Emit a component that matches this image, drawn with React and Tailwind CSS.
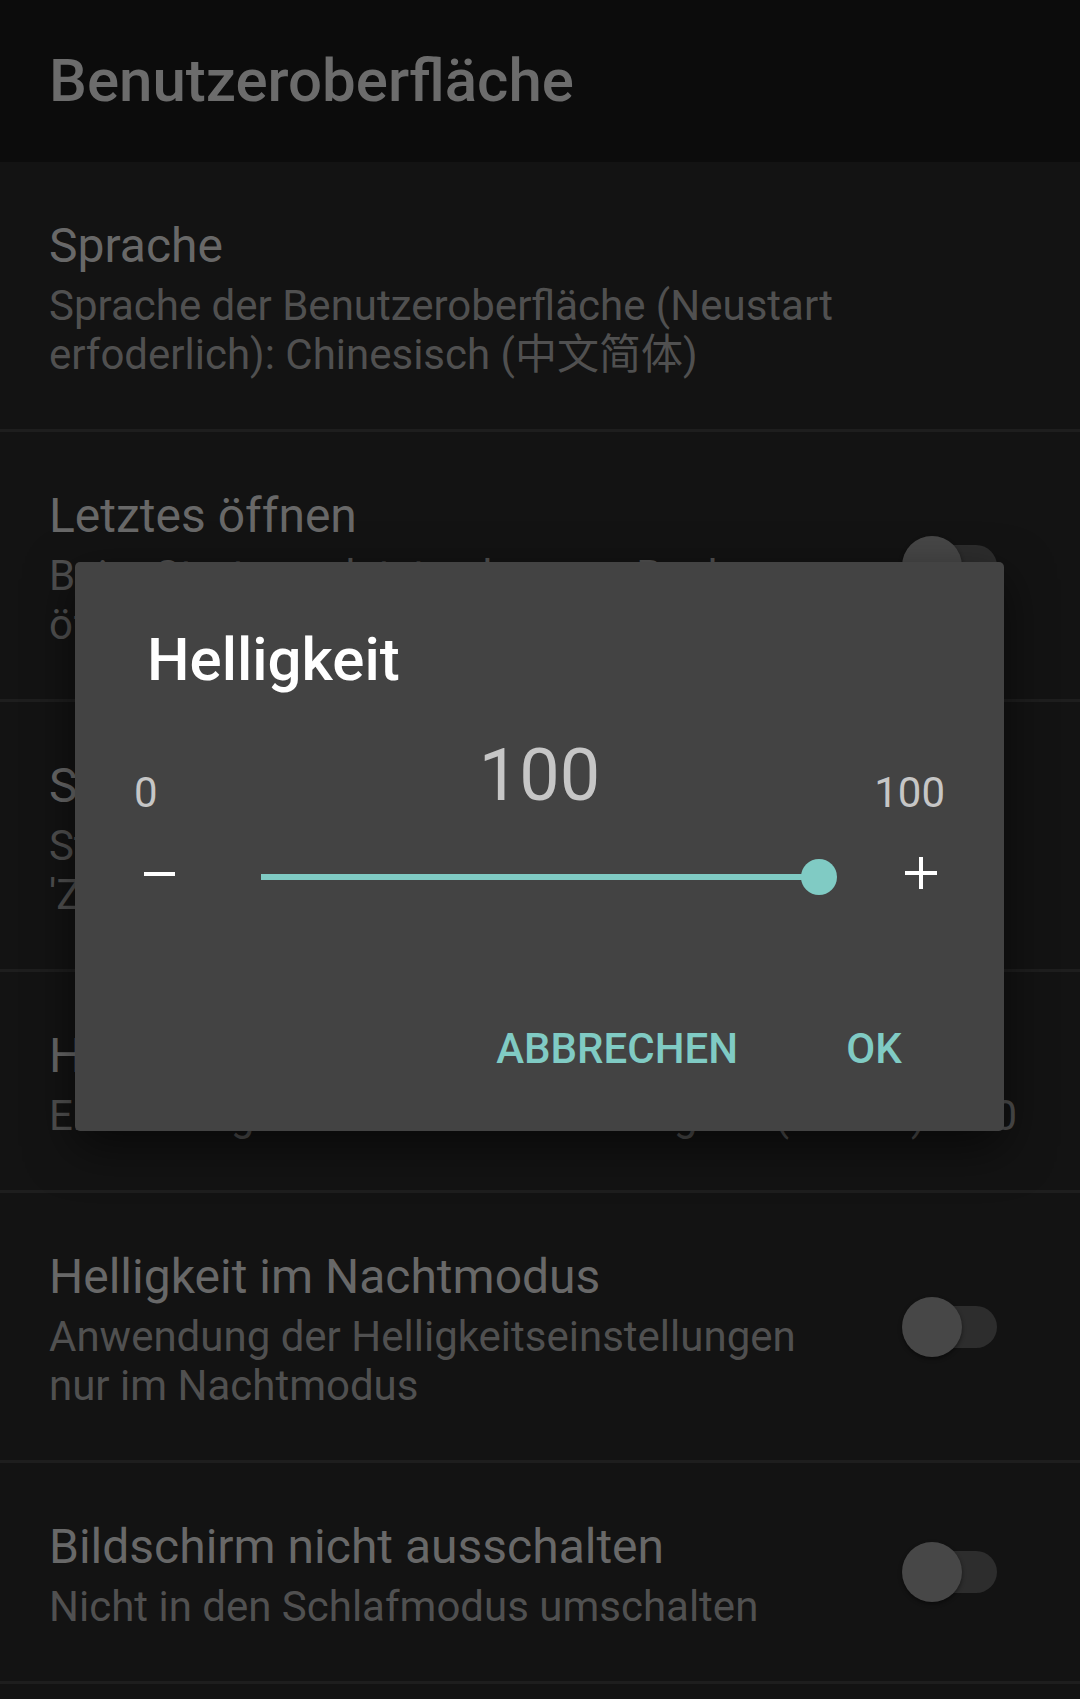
import React from 'react';

const Toggle = () => (
  <div className="relative w-[95px] h-[60px] shrink-0">
    <div className="absolute right-0 top-[9px] w-[80px] h-[42px] rounded-full bg-[#2d2d2d]" />
    <div className="absolute left-0 top-0 w-[60px] h-[60px] rounded-full bg-[#474747] shadow-[0_2px_4px_rgba(0,0,0,0.45)]" />
  </div>
);

const SettingRow = ({ title, toggle, children }) => (
  <div
    className={`flex items-center border-b-[3px] border-[#1e1e1e] pl-[49px] ${
      toggle ? 'pr-[83px]' : 'pr-[49px]'
    }`}
  >
    <div className={`flex-1 min-w-0 pt-[56px] pb-[50px] ${toggle ? 'pr-[54px]' : ''}`}>
      <div className="text-[48px] leading-[56px] text-[#686868] whitespace-nowrap">{title}</div>
      <div className="mt-[7px] text-[42px] leading-[49px] text-[#505050]">{children}</div>
    </div>
    {toggle && <Toggle />}
  </div>
);

export default function App() {
  return (
    <div className="relative w-[1080px] h-[1699px] overflow-hidden bg-[#131313] font-['Roboto','Noto_Sans_CJK_SC',sans-serif]">
      {/* Header */}
      <div className="bg-[#0c0c0c] pt-[47px] pb-[47px] pl-[49px]">
        <h1 className="text-[60px] leading-[68px] font-medium text-[#6c6c6c]">Benutzeroberfläche</h1>
      </div>

      {/* Settings list */}
      <SettingRow title="Sprache">
        Sprache der Benutzeroberfläche (Neustart erfoderlich): Chinesisch (中文简体)
      </SettingRow>
      <SettingRow title="Letztes öffnen" toggle>
        Beim Starten zuletzt gelesenes Buch
        <br />
        öffnen
      </SettingRow>
      <SettingRow title="Statusleiste" toggle>
        Statusleiste im Lesemodus anzeigen
        <br />
        'Zeit und Akku'
      </SettingRow>
      <SettingRow title="Helligkeit">
        Einstellungen der Bildschirm-Helligkeit (0–100): 100
      </SettingRow>
      <SettingRow title="Helligkeit im Nachtmodus" toggle>
        Anwendung der Helligkeitseinstellungen nur im Nachtmodus
      </SettingRow>
      <SettingRow title="Bildschirm nicht ausschalten" toggle>
        Nicht in den Schlafmodus umschalten
      </SettingRow>

      {/* Brightness dialog */}
      <div className="absolute left-[75px] top-[562px] w-[929px] bg-[#434343] rounded-[5px] shadow-[0_16px_48px_rgba(0,0,0,0.55)]">
        <div className="pt-[62px] pl-[72px] text-[60px] leading-[72px] font-medium text-white">Helligkeit</div>

        <div className="grid grid-cols-3 px-[59px] mt-[38px] text-[#c6c6c6]">
          <div className="mt-[34px] text-[42px] leading-[50px]">0</div>
          <div className="text-center text-[72px] leading-[84px]">100</div>
          <div className="mt-[34px] text-right text-[42px] leading-[50px]">100</div>
        </div>

        <div className="flex items-center h-[60px] mt-[28px] pl-[69px] pr-[67px]">
          <svg className="w-[32px] h-[32px] -mt-[4px] shrink-0" viewBox="0 0 32 32">
            <rect x="0" y="14" width="31" height="4" fill="#ffffff" />
          </svg>
          <div className="relative ml-[85px] w-[558px] h-[6px] mt-[2px] bg-[#80cbc4] shrink-0">
            <div className="absolute right-[-18px] top-1/2 -translate-y-1/2 w-[36px] h-[36px] rounded-full bg-[#80cbc4]" />
          </div>
          <svg className="ml-[86px] w-[32px] h-[32px] -mt-[6px] shrink-0" viewBox="0 0 32 32">
            <rect x="0" y="14" width="32" height="4" fill="#ffffff" />
            <rect x="14" y="0" width="4" height="32" fill="#ffffff" />
          </svg>
        </div>

        <div className="flex justify-end items-center mt-[119px] pb-[58px] pr-[34px] text-[42px] leading-[48px] font-medium text-[#80cbc4]">
          <div className="px-[24px] mr-[16px]">ABBRECHEN</div>
          <div className="w-[192px] text-center">OK</div>
        </div>
      </div>
    </div>
  );
}
